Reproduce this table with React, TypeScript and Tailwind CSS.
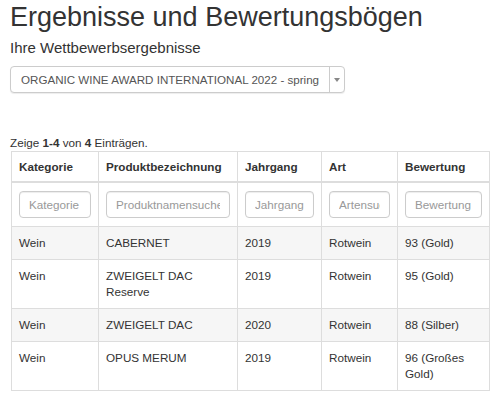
import React from 'react';

const rows = [
  { kat: 'Wein', name: 'CABERNET', jahr: '2019', art: 'Rotwein', bew: '93 (Gold)' },
  { kat: 'Wein', name: 'ZWEIGELT DAC Reserve', jahr: '2019', art: 'Rotwein', bew: '95 (Gold)' },
  { kat: 'Wein', name: 'ZWEIGELT DAC', jahr: '2020', art: 'Rotwein', bew: '88 (Silber)' },
  { kat: 'Wein', name: 'OPUS MERUM', jahr: '2019', art: 'Rotwein', bew: '96 (Großes Gold)' },
];

const filters = ['Kategorie', 'Produktnamensuche', 'Jahrgang', 'Artensuche', 'Bewertung'];

export default function App() {
  return (
    <div className="min-h-screen bg-white pl-[10px] pt-[3px] text-[#333] font-['Liberation_Sans',Arial,sans-serif]">
      <h1 className="text-[27px] leading-[1.1] font-normal">Ergebnisse und Bewertungsbögen</h1>
      <h4 className="mt-[7px] text-[15px] leading-[1.1] font-normal">Ihre Wettbewerbsergebnisse</h4>

      {/* Wettbewerb select */}
      <div className="mt-[10px] flex h-[27px] w-[335px] items-stretch rounded-[4px] border border-[#ccc] bg-white shadow-[0_1px_1px_rgba(0,0,0,0.075)]">
        <div className="flex flex-1 items-center pl-[10px] text-[11.6px] text-[#555] whitespace-nowrap overflow-hidden">
          ORGANIC WINE AWARD INTERNATIONAL 2022 - spring
        </div>
        <div className="flex w-[15px] items-center justify-center border-l border-[#ccc]">
          <span className="block h-0 w-0 border-x-[3px] border-t-[4px] border-x-transparent border-t-[#888]" />
        </div>
      </div>

      <p className="mt-[41px] text-[11.7px] leading-[17px]">
        Zeige <b>1-4</b> von <b>4</b> Einträgen.
      </p>

      <table className="ml-px w-[479px] table-fixed border-collapse border border-[#ddd] text-[11.7px] leading-[16px]">
        <colgroup>
          <col className="w-[87px]" />
          <col className="w-[139px]" />
          <col className="w-[84px]" />
          <col className="w-[76px]" />
          <col className="w-[92px]" />
        </colgroup>
        <thead>
          <tr>
            {['Kategorie', 'Produktbezeichnung', 'Jahrgang', 'Art', 'Bewertung'].map((h) => (
              <th key={h} className="border border-b-2 border-[#ddd] px-[7px] pt-[7px] pb-[6px] text-left font-bold">
                {h}
              </th>
            ))}
          </tr>
          <tr>
            {filters.map((f) => (
              <td key={f} className="border border-[#ddd] px-[7px] py-[8px]">
                <input
                  placeholder={f}
                  className="block h-[27px] w-full rounded-[4px] border border-[#ccc] px-[9px] text-[11.7px] text-[#555] placeholder:text-[#999] shadow-[inset_0_1px_1px_rgba(0,0,0,0.075)] outline-none"
                />
              </td>
            ))}
          </tr>
        </thead>
        <tbody>
          {rows.map((r, i) => (
            <tr key={i} className={i % 2 === 0 ? 'bg-[#f6f6f6]' : 'bg-white'}>
              <td className="border border-[#ddd] px-[7px] py-[8px] align-top">{r.kat}</td>
              <td className="border border-[#ddd] px-[7px] py-[8px] align-top">{r.name}</td>
              <td className="border border-[#ddd] px-[7px] py-[8px] align-top">{r.jahr}</td>
              <td className="border border-[#ddd] px-[7px] py-[8px] align-top">{r.art}</td>
              <td className="border border-[#ddd] px-[7px] py-[8px] align-top">{r.bew}</td>
            </tr>
          ))}
        </tbody>
      </table>
    </div>
  );
}
